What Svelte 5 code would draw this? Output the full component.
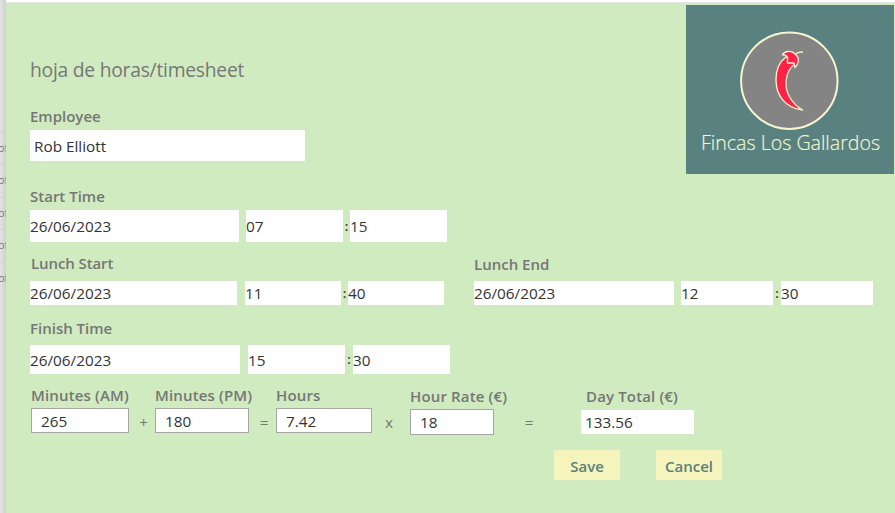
<script lang="ts">
	type TimeRow = { date: string; hour: string; minute: string }

	const start: TimeRow = { date: '26/06/2023', hour: '07', minute: '15' }
	const lunchStart: TimeRow = { date: '26/06/2023', hour: '11', minute: '40' }
	const lunchEnd: TimeRow = { date: '26/06/2023', hour: '12', minute: '30' }
	const finish: TimeRow = { date: '26/06/2023', hour: '15', minute: '30' }

	const hiddenRows = ['of', 'of', 'of', 'of', 'of']
</script>

{#snippet time(row: TimeRow)}
	<div class="field date">{row.date}</div>
	<div class="field part">{row.hour}</div>
	<span class="colon">:</span>
	<div class="field part">{row.minute}</div>
{/snippet}

<div class="page">
	<aside class="behind">
		{#each hiddenRows as text}
			<div class="behind-row">{text}</div>
		{/each}
	</aside>

	<main class="panel">
		<header class="top">
			<div class="intro">
				<h1>hoja de horas/timesheet</h1>
				<div class="label employee">Employee</div>
				<div class="field name">Rob Elliott</div>
			</div>
			<svg class="logo" width="208" height="169" viewBox="0 0 208 169">
				<rect width="208" height="169" fill="#58817f" />
				<circle cx="103.3" cy="75.7" r="48.2" fill="#848484" stroke="#f7f5cf" stroke-width="2" />
				<g stroke="#f4efc8" stroke-width="1.4" stroke-linejoin="round" stroke-linecap="round">
					<path d="M100 52C93 57 90 66 90 75C90 90 99 103 116.500 105C105 98 99 87 100 76C101 67 104 62 109 59Z" fill="#ff2148" />
					<path d="M96.500 50C98 46 105 45 108.500 48.500C112 51 115 56 109 62.500L108 58H101.500V52Q99 49 96.500 50Z" fill="#ff2148" />
					<path d="M109.500 49.500Q111.500 47 116.500 47" fill="none" />
				</g>
				<text x="15" y="145" textLength="179" lengthAdjust="spacingAndGlyphs">Fincas Los Gallardos</text>
			</svg>
		</header>

		<section class="block start">
			<div class="label">Start Time</div>
			<div class="times">{@render time(start)}</div>
		</section>

		<div class="lunch">
			<section class="block lunch-start">
				<div class="label">Lunch Start</div>
				<div class="times">{@render time(lunchStart)}</div>
			</section>
			<section class="block lunch-end">
				<div class="label">Lunch End</div>
				<div class="times">{@render time(lunchEnd)}</div>
			</section>
		</div>

		<section class="block finish">
			<div class="label">Finish Time</div>
			<div class="times">{@render time(finish)}</div>
		</section>

		<section class="totals">
			<div class="cell am">
				<div class="label">Minutes (AM)</div>
				<div class="field boxed">265</div>
			</div>
			<span class="op plus">+</span>
			<div class="cell pm">
				<div class="label">Minutes (PM)</div>
				<div class="field boxed">180</div>
			</div>
			<span class="op equals">=</span>
			<div class="cell hours">
				<div class="label">Hours</div>
				<div class="field boxed">7.42</div>
			</div>
			<span class="op times-sign">x</span>
			<div class="cell rate">
				<div class="label">Hour Rate (€)</div>
				<div class="field boxed">18</div>
			</div>
			<span class="op result">=</span>
			<div class="cell total">
				<div class="label">Day Total (€)</div>
				<div class="field">133.56</div>
			</div>
		</section>

		<footer class="actions">
			<button>Save</button>
			<button>Cancel</button>
		</footer>
	</main>
</div>

<style>
	:global(body) {
		margin: 0;
		overflow: hidden;
	}

	.page {
		box-sizing: border-box;
		display: flex;
		width: 895px;
		height: 513px;
		background: #fff;
		font-family: 'Open Sans', 'Noto Sans', sans-serif;
		font-size: 15.3px;
		color: #333;
	}

	.behind {
		box-sizing: border-box;
		width: 6px;
		padding-top: 132px;
		overflow: hidden;
		background: linear-gradient(to right, #e4e4e4, #cfcfcf);
	}

	.behind-row {
		box-sizing: border-box;
		height: 32.4px;
		border-top: 1px solid #d3d3d3;
		font-size: 11px;
		line-height: 30px;
		text-indent: -2px;
		color: #777;
	}

	.panel {
		box-sizing: border-box;
		width: 889px;
		padding: 0 0 0 24px;
		border-top: 1px solid #e6e6e6;
		margin-top: 2px;
		background: #d0ebc0;
	}

	.top {
		display: flex;
		justify-content: space-between;
		height: 171px;
		padding-right: 1px;
	}

	.logo {
		display: block;
		margin-top: 2px;
	}

	.logo text {
		font-family: 'Open Sans', 'Noto Sans', sans-serif;
		font-size: 19.5px;
		font-weight: 300;
		fill: #eef6d2;
		stroke: #eef6d2;
		stroke-width: 0.2px;
	}

	h1 {
		margin: 53px 0 23px;
		font-size: 19.3px;
		font-weight: 400;
		line-height: 27px;
		letter-spacing: -0.25px;
		color: #777;
	}

	.label {
		height: 20px;
		font-weight: 600;
		font-size: 15px;
		line-height: 20px;
		white-space: nowrap;
		color: #767676;
	}

	.field {
		box-sizing: border-box;
		display: flex;
		align-items: center;
		background: #fff;
		white-space: nowrap;
	}

	.name {
		width: 275px;
		height: 31px;
		margin-top: 4px;
		padding-left: 4px;
	}

	.times {
		display: flex;
		height: var(--height);
	}

	.date {
		width: var(--date);
		margin-right: var(--space);
	}

	.part {
		width: var(--part);
	}

	.colon {
		width: var(--colon);
		font-size: 13px;
		font-weight: 600;
		line-height: var(--height);
		text-align: center;
	}

	.start {
		--height: 32px;
		--date: 209px;
		--space: 7px;
		--part: 97px;
		--colon: 7px;
		margin-top: 12px;
	}

	.start .label {
		margin-bottom: 4px;
	}

	.lunch {
		display: flex;
		align-items: flex-end;
		gap: 30px;
		margin-top: 11px;
	}

	.lunch-start {
		--height: 24px;
		--date: 207px;
		--space: 8px;
		--part: 96px;
		--colon: 7px;
	}

	.lunch-start .label {
		padding-left: 1px;
		margin-bottom: 8px;
		letter-spacing: -0.1px;
	}

	.lunch-end {
		--height: 24px;
		--date: 200px;
		--space: 7px;
		--part: 92px;
		--colon: 8px;
	}

	.lunch-end .label {
		margin-bottom: 7px;
	}

	.finish {
		--height: 29px;
		--date: 210px;
		--space: 8px;
		--part: 97px;
		--colon: 8px;
		margin-top: 13px;
	}

	.finish .label {
		margin-bottom: 7px;
	}

	.totals {
		display: flex;
		align-items: flex-start;
		margin: 11px 0 0 1px;
	}

	.cell .label {
		margin-bottom: 3px;
		letter-spacing: 0.15px;
	}

	.boxed {
		height: 25px;
		padding-left: 9px;
		border: 1px solid #a6a6a6;
	}

	.am {
		width: 98px;
	}

	.pm {
		width: 94px;
	}

	.hours {
		width: 96px;
	}

	.rate {
		width: 84px;
		padding-top: 1px;
	}

	.rate .boxed {
		height: 26px;
	}

	.total {
		width: 113px;
		padding-top: 1px;
	}

	.total .label {
		padding-left: 5px;
		margin-bottom: 4px;
	}

	.total .field {
		height: 24px;
		padding-left: 4px;
	}

	.op {
		box-sizing: border-box;
		margin-top: 27px;
		line-height: 20px;
		text-align: center;
		color: #777;
	}

	.plus {
		width: 26px;
		padding-left: 3px;
	}

	.equals {
		width: 27px;
		padding-left: 3px;
	}

	.times-sign {
		width: 38px;
		padding-right: 4px;
	}

	.result {
		width: 87px;
		padding-right: 17px;
	}

	.actions {
		display: flex;
		gap: 36px;
		margin: 15px 0 0 524px;
	}

	button {
		width: 66px;
		height: 30px;
		padding: 2px 0 0;
		border: none;
		background: #f5f4bc;
		font-family: inherit;
		font-size: 15px;
		font-weight: 600;
		color: #58817f;
	}
</style>
